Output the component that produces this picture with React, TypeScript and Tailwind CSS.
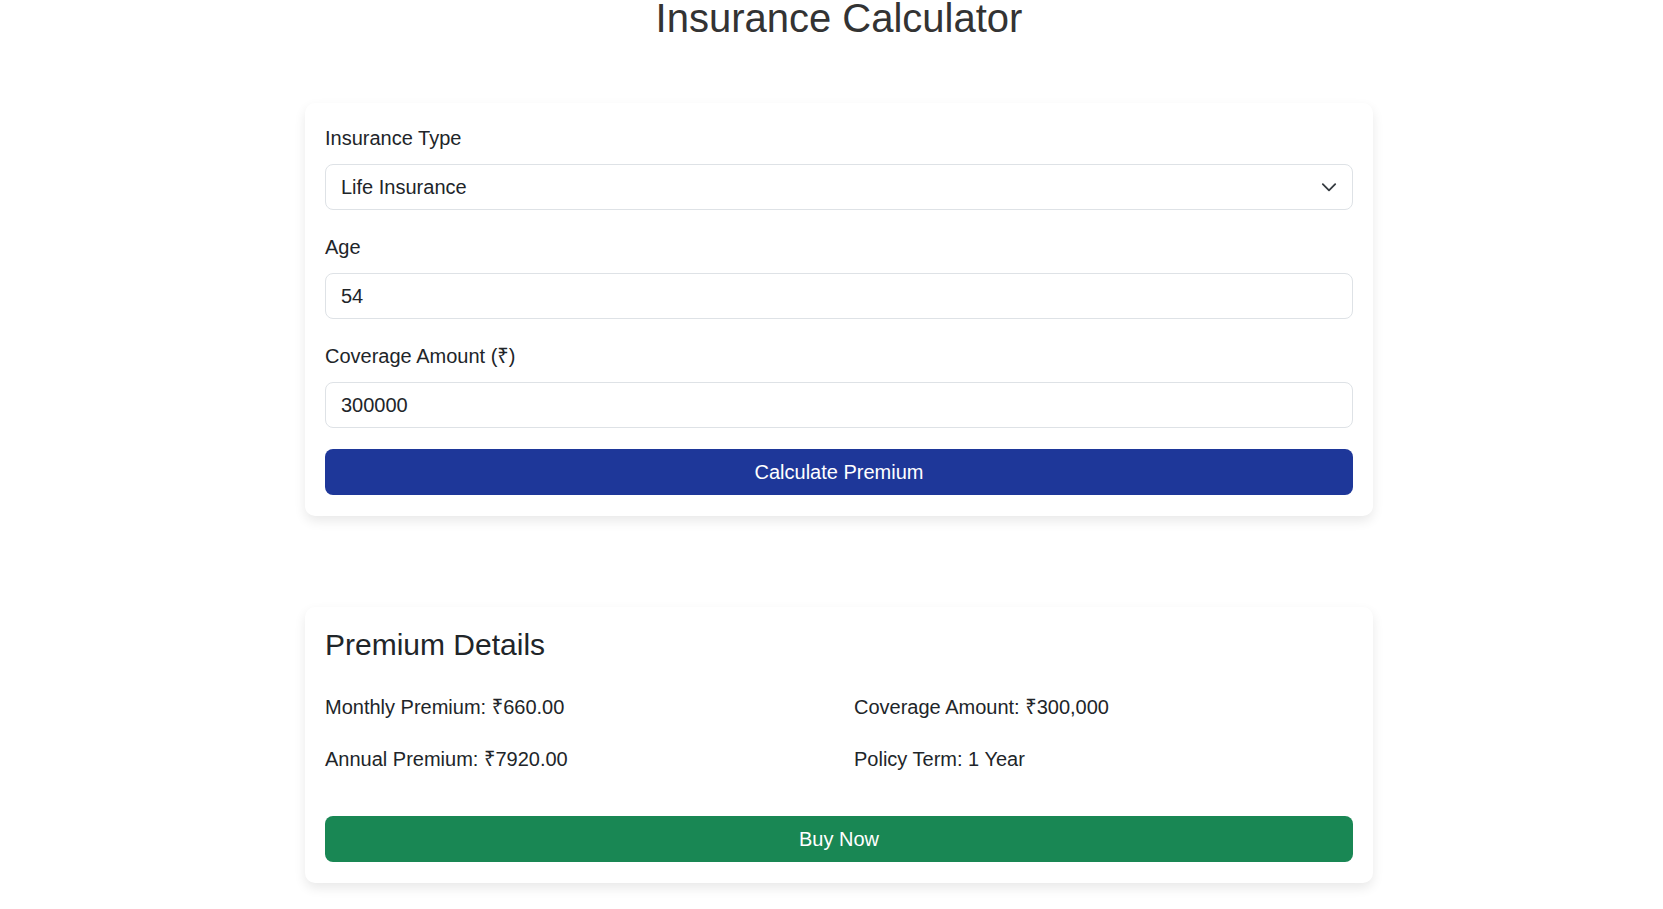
import { useState } from "react"

const font = "font-['Liberation_Sans','Noto_Sans',Arial,sans-serif]"

function Field({ label, children }: { label: string; children: React.ReactNode }) {
    return (
        <div className="mb-[22px]">
            <label className="mb-[11px] block text-[20px] leading-[30px] text-[#212529]">{label}</label>
            {children}
        </div>
    )
}

function ChevronDown() {
    return (
        <svg
            className="pointer-events-none absolute right-[15px] top-1/2 h-[18px] w-[18px] -translate-y-1/2"
            viewBox="0 0 16 16"
            fill="none"
            stroke="#343a40"
            strokeWidth="1.6"
            strokeLinecap="round"
            strokeLinejoin="round"
        >
            <path d="m2.5 5.5 5.5 5.5 5.5-5.5" />
        </svg>
    )
}

export default function App() {
    const [type, setType] = useState("life")
    const [age, setAge] = useState("54")
    const [coverage, setCoverage] = useState("300000")

    const monthly = 660
    const inputClass =
        "block h-[46px] w-full rounded-[8px] border border-[#dee2e6] bg-white px-[15px] text-[20px] text-[#212529] outline-none"

    return (
        <div className={`${font} min-h-screen bg-white pl-[15px] text-[#212529]`}>
            <div className="mx-auto w-[1068px]">
                <h1 className="-mt-[6px] text-center text-[40px] leading-[48px] text-[#333]">Insurance Calculator</h1>

                <div className="mt-[61px] rounded-[10px] bg-white px-[20px] pt-[20px] pb-[21px] shadow-[0_5px_12px_rgba(0,0,0,0.09)]">
                    <Field label="Insurance Type">
                        <div className="relative">
                            <select
                                value={type}
                                onChange={(e) => setType(e.target.value)}
                                className={`${inputClass} appearance-none`}
                            >
                                <option value="life">Life Insurance</option>
                                <option value="health">Health Insurance</option>
                                <option value="vehicle">Vehicle Insurance</option>
                            </select>
                            <ChevronDown />
                        </div>
                    </Field>
                    <Field label="Age">
                        <input className={inputClass} value={age} onChange={(e) => setAge(e.target.value)} />
                    </Field>
                    <Field label="Coverage Amount (₹)">
                        <input className={inputClass} value={coverage} onChange={(e) => setCoverage(e.target.value)} />
                    </Field>
                    <button className="-mt-[1px] flex h-[46px] w-full items-center justify-center rounded-[8px] bg-[#1e3799] text-[20px] text-white">
                        Calculate Premium
                    </button>
                </div>

                <div className="mt-[91px] rounded-[10px] bg-white px-[20px] pt-[20px] pb-[21px] shadow-[0_5px_12px_rgba(0,0,0,0.09)]">
                    <h2 className="text-[30px] leading-[36px] text-[#212529]">Premium Details</h2>
                    <div className="mt-[29px] grid grid-cols-2 gap-x-[30px] gap-y-[22px] text-[20px] leading-[30px]">
                        <p>Monthly Premium: ₹{monthly.toFixed(2)}</p>
                        <p>Coverage Amount: ₹{Number(coverage).toLocaleString("en-US")}</p>
                        <p>Annual Premium: ₹{(monthly * 12).toFixed(2)}</p>
                        <p>Policy Term: 1 Year</p>
                    </div>
                    <button className="mt-[42px] flex h-[46px] w-full items-center justify-center rounded-[8px] bg-[#198754] text-[20px] text-white">
                        Buy Now
                    </button>
                </div>
            </div>
        </div>
    )
}
